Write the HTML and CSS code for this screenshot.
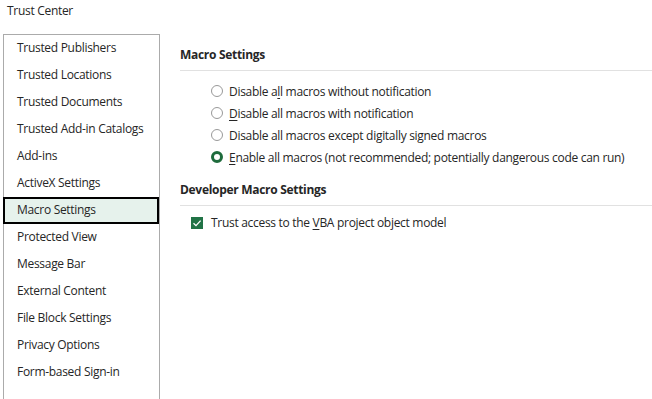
FILE: index.html
```html
<!DOCTYPE html>
<html>
<head>
<meta charset="utf-8">
<link rel="stylesheet" href="styles.css">
</head>
<body>
<div class="title">Trust Center</div>
<div class="main">
  <nav class="nav">
    <div class="item">Trusted Publishers</div>
    <div class="item">Trusted Locations</div>
    <div class="item">Trusted Documents</div>
    <div class="item">Trusted Add-in Catalogs</div>
    <div class="item">Add-ins</div>
    <div class="item">ActiveX Settings</div>
    <div class="item selected">Macro Settings</div>
    <div class="item">Protected View</div>
    <div class="item">Message Bar</div>
    <div class="item">External Content</div>
    <div class="item">File Block Settings</div>
    <div class="item">Privacy Options</div>
    <div class="item">Form-based Sign-in</div>
  </nav>
  <section class="content">
    <h2 class="heading">Macro Settings</h2>
    <div class="options">
      <label class="radio"><span class="dot"></span><span>Disable a<u>l</u>l macros without notification</span></label>
      <label class="radio"><span class="dot"></span><span><u>D</u>isable all macros with notification</span></label>
      <label class="radio"><span class="dot"></span><span>Disable all macros except di<u>g</u>itally signed macros</span></label>
      <label class="radio"><span class="dot on"></span><span><u>E</u>nable all macros (not recommended; potentially dangerous code can run)</span></label>
    </div>
    <h2 class="heading dev">Developer Macro Settings</h2>
    <label class="check"><span class="box"><svg width="12" height="12" viewBox="0 0 12 12"><path d="M2.5 6.2 L5 8.6 L9.6 3.6" fill="none" stroke="#fff" stroke-width="1.3"/></svg></span><span>Trust access to the <u>V</u>BA project object model</span></label>
  </section>
</div>
</body>
</html>
```
FILE: styles.css
```css
html, body { margin: 0; padding: 0; background: #fff; }
body {
  font-family: "Segoe UI", "Open Sans", sans-serif;
  font-size: 12px;
  letter-spacing: -0.3px;
  color: #262626;
  width: 652px;
  height: 399px;
  overflow: hidden;
}
.title {
  height: 34px;
  padding-left: 7px;
  line-height: 21px;
}
.main {
  display: flex;
}
.nav {
  width: 155px;
  margin-left: 3px;
  border: 1px solid #ababab;
  border-bottom: none;
  height: 380px;
}
.item {
  height: 27px;
  line-height: 25px;
  padding-left: 13px;
  box-sizing: border-box;
}
.item.selected {
  background: #e6f2ec;
  border: 2px solid #000;
  margin-left: -1px;
  padding-left: 12px;
  line-height: 21px;
}
.content {
  flex: 1;
  padding-left: 20px;
}
.heading {
  margin: 0;
  font-size: 12px;
  font-weight: bold;
  height: 36px;
  line-height: 42px;
  border-bottom: 1px solid #e1e1e1;
}
.options {
  padding-top: 9px;
  padding-left: 31px;
  display: flex;
  flex-direction: column;
}
.radio {
  display: flex;
  align-items: center;
  height: 22px;
  gap: 6px;
}
.dot {
  width: 12px;
  height: 12px;
  border: 1px solid #999;
  border-radius: 50%;
  box-sizing: border-box;
}
.dot.on {
  border: 3.5px solid #1e6b3c;
}
.dev {
  margin-top: 7px;
  height: 30px;
  line-height: 30px;
}
.check {
  display: flex;
  align-items: center;
  gap: 8px;
  margin-top: 8px;
  margin-left: 11px;
}
.box {
  width: 12px;
  height: 12px;
  background: #217346;
  display: flex;
}
u { text-decoration: underline; text-underline-offset: 2px; }
```
